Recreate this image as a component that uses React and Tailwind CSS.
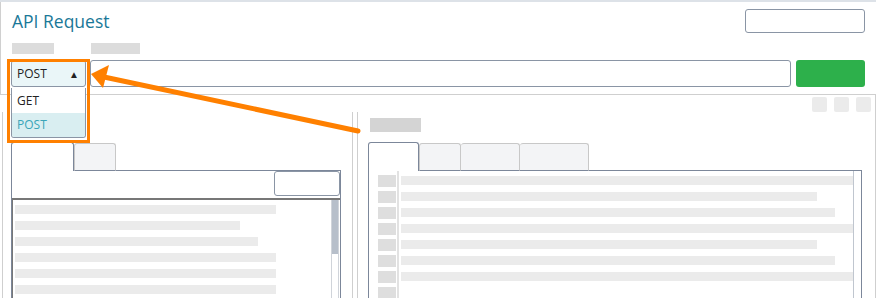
import React from "react";

const leftRows = [261, 225, 243, 261, 261, 261];
const rightRows = [455, 416, 434, 455, 416, 434, 455];

export default function App() {
  return (
    <div className="relative w-[876px] h-[298px] overflow-hidden bg-white border-t-2 border-[#dde2e8] font-['Open_Sans',_'Noto_Sans',_sans-serif]">
      {/* header */}
      <div className="border-l border-[#d0d0d0] ml-0">
        <div className="flex items-start justify-between pl-[11px] pr-[11px] pt-[7px]">
          <div className="text-[17.5px] leading-[24px] text-[#1a7898] mt-[0px]">API Request</div>
          <div className="w-[120px] h-[24px] border border-[#8a95a5] rounded-[3px]" />
        </div>
        <div className="flex gap-[37px] pl-[11px] mt-[10px]">
          <div className="w-[42px] h-[11px] bg-[#dcdcdc]" />
          <div className="w-[49px] h-[11px] bg-[#dcdcdc]" />
        </div>
        <div className="flex pl-[10px] pr-[11px] mt-[6px] pb-[7px]">
          <div className="w-[75px] h-[27px] border border-[#8a95a5] rounded-[3px] bg-[#eaf6f8] flex items-center justify-between pl-[5px] pr-[6px] text-[12px] text-[#222]">
            <span>POST</span>
            <span className="text-[10px] leading-none">▲</span>
          </div>
          <div className="flex-1 ml-[4px] h-[27px] border border-[#8a95a5] rounded-[3px]" />
          <div className="w-[69px] ml-[5px] h-[27px] rounded-[3px] bg-[#2db04b]" />
        </div>
      </div>
      <div className="border-t border-[#cfcfcf]" />
      {/* toolbar */}
      <div className="flex justify-end gap-[7px] pr-[4px] pt-[2px] border-r border-[#cfcfcf]">
        <div className="w-[15px] h-[15px] rounded-[2px] bg-[#ebebeb]" />
        <div className="w-[15px] h-[15px] rounded-[2px] bg-[#ebebeb]" />
        <div className="w-[15px] h-[15px] rounded-[2px] bg-[#ebebeb]" />
      </div>
      {/* columns */}
      <div className="flex h-[200px] border-r border-[#cfcfcf]">
        {/* left */}
        <div className="w-[350px] ml-[2px] border-l border-[#cfcfcf] pl-[8px] pt-[30px]">
          <div className="flex items-end">
            <div className="w-[63px] h-[29px] border border-b-0 border-[#7c879a] rounded-t-[3px] bg-white" />
            <div className="w-[42px] h-[28px] border border-[#c8c8c8] border-b-[#7c879a] rounded-t-[3px] bg-[#f3f4f6]" />
            <div className="w-[225px] border-b border-[#7c879a]" />
          </div>
          <div className="w-[330px] border-l border-r border-[#7c879a]">
            <div className="flex justify-end h-[27px]">
              <div className="w-[66px] h-[25px] border border-[#8a95a5] rounded-[3px]" />
            </div>
            <div className="relative border-t-2 border-l border-[#777] h-[120px]">
              <div className="flex flex-col gap-[7px] pt-[5px] pl-[2px]">
                {leftRows.map((w, i) => (
                  <div key={i} className="h-[9px] bg-[#ebebeb]" style={{ width: w }} />
                ))}
              </div>
              <div className="absolute right-[1px] top-0 w-[8px] h-[120px] border-l border-r border-[#d0d4da] bg-white">
                <div className="h-[54px] bg-[#b7bfca]" />
              </div>
            </div>
          </div>
        </div>
        {/* divider */}
        <div className="w-[6px] border-l border-r border-[#cfcfcf]" />
        {/* right */}
        <div className="flex-1 pl-[10px] pt-[6px]">
          <div className="w-[51px] h-[14px] bg-[#d4d4d4] ml-[2px]" />
          <div className="flex items-end mt-[10px]">
            <div className="w-[51px] h-[29px] border border-b-0 border-[#7c879a] rounded-t-[3px] bg-white" />
            <div className="w-[42px] h-[28px] border border-[#c8c8c8] border-b-[#7c879a] rounded-t-[3px] bg-[#f3f4f6]" />
            <div className="w-[59px] h-[28px] border border-l-0 border-[#c8c8c8] border-b-[#7c879a] rounded-t-[3px] bg-[#f3f4f6]" />
            <div className="w-[69px] h-[28px] border border-l-0 border-[#c8c8c8] border-b-[#7c879a] rounded-t-[3px] bg-[#f3f4f6]" />
            <div className="w-[273px] border-b border-[#7c879a]" />
          </div>
          <div className="relative w-[494px] h-[140px] border-l border-r border-[#7c879a] flex">
            <div className="w-[30px] flex flex-col items-end gap-[4px] pt-[4px] pr-[1px] border-r-2 border-[#e2e2e2]">
              {[0, 1, 2, 3, 4, 5, 6, 7].map((i) => (
                <div key={i} className="w-[18px] h-[12px] bg-[#dedede]" />
              ))}
            </div>
            <div className="flex flex-col gap-[7px] pt-[5px] pl-[2px]">
              {rightRows.map((w, i) => (
                <div key={i} className="h-[9px] bg-[#ebebeb]" style={{ width: w }} />
              ))}
            </div>
            <div className="absolute right-0 top-0 w-[8px] h-[140px] border-l border-[#c0c6cf] bg-white" />
          </div>
        </div>
      </div>

      {/* dropdown menu */}
      <div className="absolute left-[11px] top-[86px] w-[75px] border border-[#8a95a5] border-t-0 rounded-b-[3px] bg-white text-[12px] overflow-hidden">
        <div className="h-[25px] flex items-center pl-[5px] text-[#222]">GET</div>
        <div className="h-[24px] flex items-center pl-[5px] text-[#3aa5b8] bg-[#d9eef1]">POST</div>
      </div>
      {/* orange highlight */}
      <div className="absolute left-[7px] top-[57px] w-[83px] h-[84px] border-[3px] border-[#ff8000]" />
      {/* arrow */}
      <svg className="absolute left-0 top-0" width="876" height="298" viewBox="0 0 876 298">
        <line x1="358" y1="129" x2="104" y2="75" stroke="#ff8000" strokeWidth="5" strokeLinecap="round" />
        <polygon points="91,72 109,63 103,86" fill="#ff8000" />
      </svg>
    </div>
  );
}
